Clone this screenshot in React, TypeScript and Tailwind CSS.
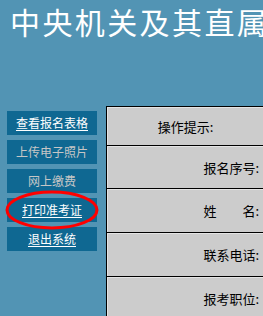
const menu = [
  { label: '查看报名表格', active: true },
  { label: '上传电子照片', active: false },
  { label: '网上缴费', active: false },
  { label: '打印准考证', active: true },
  { label: '退出系统', active: true },
]

const rows = [
  { label: '操作提示:', center: true, h: 'h-[38px]' },
  { label: '报名序号:', h: 'h-[42px]' },
  { label: '姓\u3000\u3000名:', h: 'h-[43px]' },
  { label: '联系电话:', h: 'h-[43px]' },
  { label: '报考职位:', h: 'h-[43px]' },
]

export default function App() {
  return (
    <div
      className="h-screen w-full overflow-hidden bg-[#5294b4]"
      style={{ fontFamily: '"SimSun", "Noto Sans CJK SC", sans-serif' }}
    >
      <h1 className="h-[106px] whitespace-nowrap pl-[10px] pt-[3px] text-[30px] font-normal leading-[36px] tracking-[2.4px] text-white">
        中央机关及其直属机构考试录用公务员报名
      </h1>

      <div className="flex">
        <div className="relative flex w-[106px] shrink-0 flex-col gap-[5px] pl-[7px] pt-[5px]">
          {menu.map((m) => (
            <div
              key={m.label}
              className={`flex h-[24px] w-[90px] items-center justify-center bg-[#0f6892] text-[12px] ${
                m.active ? 'text-white underline underline-offset-2' : 'text-[#c6c6c6]'
              }`}
            >
              {m.label}
            </div>
          ))}
          <svg className="pointer-events-none absolute left-[5px] top-[84px]" width="94" height="40" viewBox="0 0 94 40">
            <ellipse cx="47" cy="20" rx="45" ry="18" fill="none" stroke="#ff0000" strokeWidth="3" />
          </svg>
        </div>

        <div className="w-[400px] shrink-0 border-l border-t border-black">
          {rows.map((r) => (
            <div key={r.label} className="flex border-b border-black bg-[#cccccc]">
              <div
                className={`flex ${r.h} w-[156px] items-center border-l border-t border-[#e4e4e4] text-[13px] text-black ${
                  r.center ? 'justify-center' : 'justify-end pr-[4px]'
                }`}
              >
                {r.label}
              </div>
              <div className="flex-1 border-l border-black" />
            </div>
          ))}
        </div>
      </div>
    </div>
  )
}
